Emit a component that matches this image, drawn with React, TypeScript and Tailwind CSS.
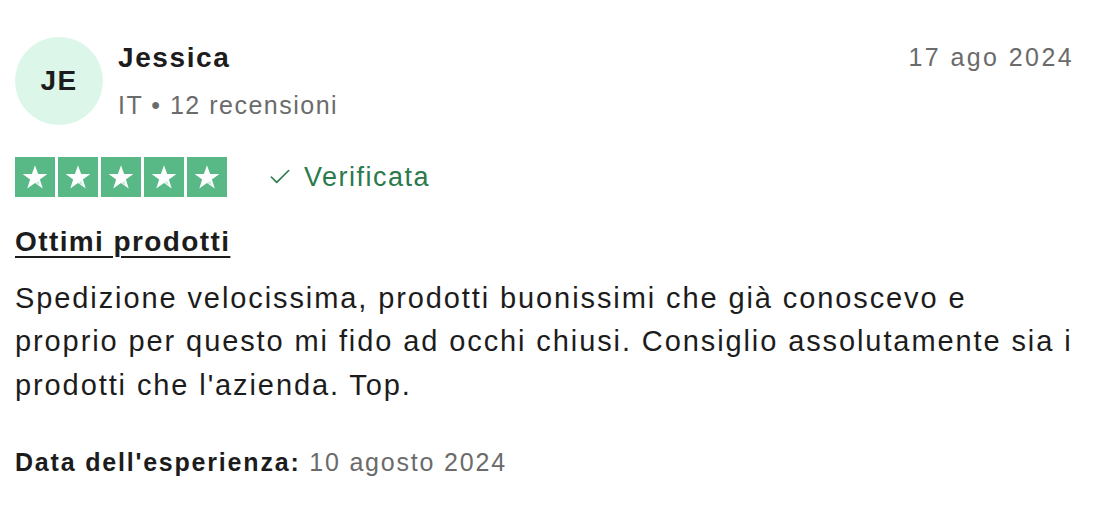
import { Check } from 'lucide-react'

// ── Star box ──────────────────────────────────────────────────────────────

function StarBox() {
  return (
    <div className="w-[40px] h-[40px] bg-[#58b886] flex items-center justify-center">
      <svg width="30" height="30" viewBox="0 0 24 24">
        <path
          d="M12 2.6l2.5 7h7.4l-6 4.4 2.3 7.1L12 16.7l-6.2 4.4 2.3-7.1-6-4.4h7.4z"
          fill="#ffffff"
        />
        <path d="M14.7 15.1l1.1 3.4L12 16.7z" fill="#c9ead8" />
      </svg>
    </div>
  )
}

export default function App() {
  return (
    <div
      className="w-[1096px] h-[516px] bg-white text-[#1c1c1c] pl-[15px] pr-[24px] pt-[37px]"
      style={{ fontFamily: '"Liberation Sans", Arial, sans-serif' }}
    >
      {/* Header */}
      <div className="flex items-start">
        <div className="w-[88px] h-[88px] rounded-full bg-[#dcf7ea] flex items-center justify-center shrink-0">
          <span className="font-bold text-[28px] tracking-[1.5px] text-[#1c1c1c]">JE</span>
        </div>
        <div className="ml-[15px] flex-1 pt-[4px]">
          <div className="font-bold text-[28px] leading-[34px] tracking-[1.6px]">Jessica</div>
          <div className="text-[25px] leading-[30px] tracking-[1.5px] text-[#6b6b6b] mt-[15px]">IT • 12 recensioni</div>
        </div>
        <div className="text-[25px] leading-[30px] tracking-[2.4px] text-[#6b6b6b] pt-[5px] -mr-[2px]">17 ago 2024</div>
      </div>

      {/* Rating */}
      <div className="flex items-center mt-[32px]">
        <div className="flex gap-[3px]">
          <StarBox />
          <StarBox />
          <StarBox />
          <StarBox />
          <StarBox />
        </div>
        <div className="flex items-center ml-[40px] text-[#2b7a4b]">
          <Check size={26} strokeWidth={1.5} />
          <span className="text-[27px] tracking-[1.5px] ml-[11px]">Verificata</span>
        </div>
      </div>

      {/* Review */}
      <div className="font-bold text-[28px] leading-[36px] tracking-[1.4px] underline underline-offset-[5px] decoration-[2px] mt-[26px]">
        Ottimi prodotti
      </div>
      <p className="text-[29px] leading-[43.5px] tracking-[1.9px] mt-[17px] w-[1062px]">
        Spedizione velocissima, prodotti buonissimi che già conoscevo e proprio per questo mi fido ad occhi chiusi. Consiglio assolutamente sia i prodotti che l'azienda. Top.
      </p>

      {/* Footer */}
      <div className="text-[25px] leading-[30px] tracking-[1.8px] mt-[40px]">
        <span className="font-bold">Data dell'esperienza:</span>{' '}
        <span className="text-[#6b6b6b]">10 agosto 2024</span>
      </div>
    </div>
  )
}
